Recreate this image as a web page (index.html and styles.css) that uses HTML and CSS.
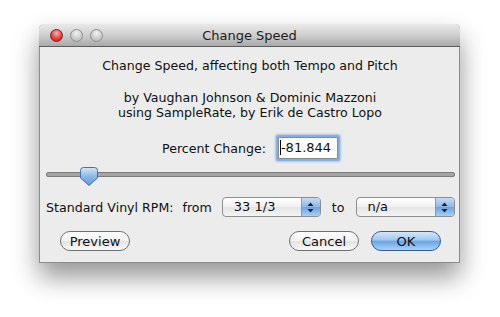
FILE: index.html
```html
<html>
<head>
  <link rel="stylesheet" href="styles.css">
</head>
<body>
  <div class="window">
    <div class="titlebar">
      <div class="lights">
        <span class="light red"></span>
        <span class="light"></span>
        <span class="light"></span>
      </div>
      <div class="title">Change Speed</div>
    </div>
    <div class="content">
      <p class="info">Change Speed, affecting both Tempo and Pitch</p>
      <p class="info credits">by Vaughan Johnson &amp; Dominic Mazzoni<br>using SampleRate, by Erik de Castro Lopo</p>

      <div class="percent">
        <span>Percent Change:</span>
        <div class="field"><span class="caret"></span>-81.844</div>
      </div>

      <div class="slider">
        <div class="track"></div>
        <svg class="thumb" width="18" height="19" viewBox="0 0 18 19">
          <defs>
            <linearGradient id="tg" x1="0" y1="0" x2="0" y2="1">
              <stop offset="0" stop-color="#d6e8fb"/>
              <stop offset="0.5" stop-color="#8ab8ec"/>
              <stop offset="1" stop-color="#5d9ae0"/>
            </linearGradient>
          </defs>
          <path d="M3.5 0.5 H14.5 Q17.5 0.5 17.5 3.5 V11 L9 18.5 L0.5 11 V3.5 Q0.5 0.5 3.5 0.5 Z" fill="url(#tg)" stroke="#4a6fa5" stroke-width="1"/>
        </svg>
      </div>

      <div class="rpm">
        <span class="rpm-label">Standard Vinyl RPM:</span>
        <span class="rpm-word">from</span>
        <div class="select">
          <span class="value">33 1/3</span>
          <span class="arrows">
            <svg width="7" height="11" viewBox="0 0 7 11"><path d="M3.5 0.5 L6.5 4 H0.5 Z M0.5 7 H6.5 L3.5 10.5 Z" fill="#222"/></svg>
          </span>
        </div>
        <span class="rpm-word to">to</span>
        <div class="select">
          <span class="value">n/a</span>
          <span class="arrows">
            <svg width="7" height="11" viewBox="0 0 7 11"><path d="M3.5 0.5 L6.5 4 H0.5 Z M0.5 7 H6.5 L3.5 10.5 Z" fill="#222"/></svg>
          </span>
        </div>
      </div>

      <div class="buttons">
        <button class="btn">Preview</button>
        <div class="spacer"></div>
        <button class="btn">Cancel</button>
        <button class="btn default">OK</button>
      </div>
    </div>
  </div>
</body>
</html>
```

FILE: styles.css
```css
body {
  margin: 0;
  padding: 24px 0 0 39px;
  background: #ffffff;
  font-family: "DejaVu Sans", "Liberation Sans", sans-serif;
  font-size: 12.6px;
  color: #111;
}

.window {
  width: 421px;
  height: 239px;
  box-sizing: border-box;
  border: 1px solid #8c8c8c;
  border-top: none;
  border-radius: 5px 5px 0 0;
  background: #ececec;
  box-shadow: 0 14px 26px rgba(0, 0, 0, 0.42);
  display: flex;
  flex-direction: column;
}

.titlebar {
  height: 22px;
  border-radius: 5px 5px 0 0;
  background: linear-gradient(#e9e9e9, #cfcfcf 50%, #a9a9a9);
  border-bottom: 1px solid #5c5c5c;
  margin: 0 -1px;
  display: flex;
  align-items: center;
  position: relative;
}

.lights {
  display: flex;
  gap: 7px;
  padding-left: 11px;
}

.light {
  width: 13px;
  height: 13px;
  border-radius: 50%;
  box-sizing: border-box;
  border: 1px solid #8e8e8e;
  background: radial-gradient(circle at 50% 30%, #f2f2f2, #c9c9c9 60%, #b4b4b4);
}

.light.red {
  border-color: #8a1a1a;
  background: radial-gradient(circle at 50% 30%, #ffb3b3, #e8413d 55%, #b51a17);
}

.title {
  position: absolute;
  left: 0;
  right: 0;
  text-align: center;
  font-size: 13px;
  color: #1c1c1c;
  pointer-events: none;
}

.content {
  flex: 1;
  padding: 0 4px 0 5px;
  display: flex;
  flex-direction: column;
}

.info {
  margin: 0;
  text-align: center;
  line-height: 15px;
}

.info:first-child {
  margin-top: 11px;
}

.credits {
  margin-top: 17px;
}

.percent {
  display: flex;
  justify-content: center;
  align-items: center;
  gap: 12px;
  margin-top: 17px;
}

.field {
  width: 57px;
  height: 20px;
  background: #fff;
  border: 1px solid #8a8a8a;
  box-shadow: 0 0 0 2px #86aee0, 0 0 2px 3px rgba(120, 160, 220, 0.5);
  border-radius: 1px;
  line-height: 20px;
  overflow: hidden;
  white-space: nowrap;
  font-size: 13px;
  padding-left: 1px;
}

.caret {
  display: inline-block;
  width: 1px;
  height: 15px;
  background: #000;
  vertical-align: -3px;
}

.slider {
  position: relative;
  height: 20px;
  margin-top: 8px;
}

.track {
  position: absolute;
  left: 1px;
  right: 0;
  top: 5px;
  height: 3px;
  border-radius: 2px;
  background: #a5a5a5;
  border: 1px solid #7c7c7c;
}

.thumb {
  position: absolute;
  left: 35px;
  top: 0;
}

.rpm {
  display: flex;
  align-items: center;
  margin-top: 10px;
}

.rpm-label {
  margin-left: 1px;
}

.rpm-word {
  margin: 0 10px 0 9px;
}

.rpm-word.to {
  margin: 0 11px;
}

.select {
  width: 99px;
  height: 20px;
  box-sizing: border-box;
  border: 1px solid #8e8e8e;
  border-radius: 4px;
  background: linear-gradient(#ffffff, #f0f0f0 50%, #e4e4e4 51%, #f4f4f4);
  display: flex;
  align-items: stretch;
  overflow: hidden;
}

.select .value {
  flex: 1;
  padding-left: 11px;
  line-height: 18px;
  font-size: 13px;
}

.arrows {
  width: 18px;
  border-left: 1px solid #7b9cc9;
  background: linear-gradient(#c5dcf7, #8bb8ea 50%, #6aa3e3 51%, #a9cef4);
  display: flex;
  align-items: center;
  justify-content: center;
}

.buttons {
  display: flex;
  align-items: center;
  margin-top: 14px;
  padding: 0 14px 0 15px;
  gap: 12px;
}

.spacer {
  flex: 1;
}

.btn {
  width: 70px;
  height: 20px;
  border: 1px solid #6f6f6f;
  border-radius: 10px;
  background: linear-gradient(#ffffff, #f2f2f2 50%, #e2e2e2 51%, #fafafa);
  font-family: "DejaVu Sans", "Liberation Sans", sans-serif;
  font-size: 13px;
  color: #111;
  padding: 0;
}

.btn.default {
  border-color: #3b5b93;
  background: linear-gradient(#d4e6fa, #9fc6f1 45%, #6ba5e6 52%, #a8d0f7);
}
```
